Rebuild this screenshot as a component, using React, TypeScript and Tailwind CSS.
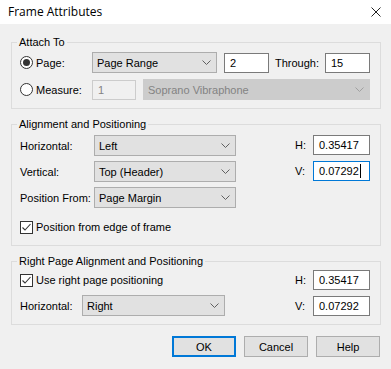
import { ReactNode } from "react";

// Windows 10 style dialog: "Frame Attributes"

function Chevron({ color = "#606060" }: { color?: string }) {
  return (
    <svg width="9" height="5" viewBox="0 0 9 5" className="shrink-0">
      <path d="M0.5 0.5 L4.5 4.5 L8.5 0.5" fill="none" stroke={color} strokeWidth="1" />
    </svg>
  );
}

function Select({ value, width, disabled }: { value: string; width: string; disabled?: boolean }) {
  return (
    <div
      className={`flex h-[21px] shrink-0 items-center justify-between border pl-[4px] pr-[5px] ${width} ${
        disabled ? "border-[#cccccc] bg-[#cccccc] text-[#838383]" : "border-[#adadad] bg-[#e1e1e1] text-black"
      }`}
    >
      <span>{value}</span>
      <Chevron color={disabled ? "#a0a0a0" : "#606060"} />
    </div>
  );
}

function Input({
  value,
  width,
  disabled,
  focused,
}: {
  value: string;
  width: string;
  disabled?: boolean;
  focused?: boolean;
}) {
  let look = "border-[#7a7a7a] bg-white text-black";
  if (disabled) look = "border-[#cccccc] bg-[#f0f0f0] text-[#838383]";
  if (focused) look = "border-[#0078d7] bg-white text-black";
  return (
    <div className={`flex h-[20px] shrink-0 items-center border pl-[5px] ${width} ${look}`}>
      <span>{value}</span>
      {focused && <span className="ml-[1px] h-[14px] w-px bg-black" />}
    </div>
  );
}

function Radio({ checked, label }: { checked?: boolean; label: string }) {
  return (
    <div className="flex items-center">
      <span className="flex h-[13px] w-[13px] items-center justify-center rounded-full border border-[#333333] bg-white">
        {checked && <span className="h-[7px] w-[7px] rounded-full bg-[#333333]" />}
      </span>
      <span className="ml-[3px]">{label}</span>
    </div>
  );
}

function Checkbox({ label }: { label: string }) {
  return (
    <div className="flex items-center">
      <span className="flex h-[13px] w-[13px] items-center justify-center border border-[#333333] bg-white">
        <svg width="11" height="11" viewBox="0 0 11 11">
          <path d="M1.5 5.5 L4 8 L9.5 2" fill="none" stroke="#333333" strokeWidth="1.1" />
        </svg>
      </span>
      <span className="ml-[3px]">{label}</span>
    </div>
  );
}

function Group({ title, className, children }: { title: string; className: string; children: ReactNode }) {
  return (
    <fieldset className={`border border-[#dcdcdc] pl-[8px] pr-[10px] ${className}`}>
      <legend className="-ml-[3px] px-[2px] leading-4">{title}</legend>
      {children}
    </fieldset>
  );
}

function Button({ label, primary }: { label: string; primary?: boolean }) {
  return (
    <div
      className={`flex h-[21px] w-[64px] items-center justify-center bg-[#e1e1e1] ${
        primary ? "border-2 border-[#0078d7]" : "border border-[#adadad]"
      }`}
    >
      {label}
    </div>
  );
}

export default function App() {
  return (
    <div className="h-[369px] w-[391px] overflow-hidden whitespace-nowrap bg-[#f0f0f0] font-['Liberation_Sans',Arial,sans-serif] text-[11px] leading-4 text-black">
      {/* title bar */}
      <div className="flex h-[24px] items-center justify-between bg-white pl-[8px] pr-[10px]">
        <span className="font-['Open_Sans',sans-serif] text-[12px]">Frame Attributes</span>
        <svg width="10" height="10" viewBox="0 0 10 10">
          <path d="M0.5 0.5 L9.5 9.5 M9.5 0.5 L0.5 9.5" stroke="#222" strokeWidth="1" />
        </svg>
      </div>

      <div className="pl-[11px] pr-[10px]">
        <Group title="Attach To" className="mt-[10px] pt-[2px] pb-[8px]">
          <div className="flex h-[21px] items-center">
            <div className="w-[72px]">
              <Radio checked label="Page:" />
            </div>
            <Select value="Page Range" width="w-[125px]" />
            <div className="ml-[7px]">
              <Input value="2" width="w-[45px]" />
            </div>
            <span className="w-[56px] pl-[6px]">Through:</span>
            <Input value="15" width="w-[45px]" />
          </div>
          <div className="mt-[6px] flex h-[21px] items-center">
            <div className="w-[72px]">
              <Radio label="Measure:" />
            </div>
            <Input value="1" width="w-[44px]" disabled />
            <div className="ml-[7px]">
              <Select value="Soprano Vibraphone" width="w-[227px]" disabled />
            </div>
          </div>
        </Group>

        <Group title="Alignment and Positioning" className="mt-[7px] pt-[3px] pb-[10px]">
          <div className="flex justify-between">
            <div className="flex flex-col gap-[5px]">
              <div className="flex items-center">
                <span className="w-[74px]">Horizontal:</span>
                <Select value="Left" width="w-[142px]" />
              </div>
              <div className="flex items-center">
                <span className="w-[74px]">Vertical:</span>
                <Select value="Top (Header)" width="w-[142px]" />
              </div>
              <div className="flex items-center">
                <span className="w-[74px]">Position From:</span>
                <Select value="Page Margin" width="w-[142px]" />
              </div>
            </div>
            <div className="flex flex-col gap-[6px]">
              <div className="flex items-center">
                <span className="w-[18px]">H:</span>
                <Input value="0.35417" width="w-[57px]" />
              </div>
              <div className="flex items-center">
                <span className="w-[18px]">V:</span>
                <Input value="0.07292" width="w-[57px]" focused />
              </div>
            </div>
          </div>
          <div className="mt-[11px]">
            <Checkbox label="Position from edge of frame" />
          </div>
        </Group>

        <Group title="Right Page Alignment and Positioning" className="mt-[7px] pt-[1px] pb-[8px]">
          <div className="flex flex-col gap-[5px]">
            <div className="flex h-[20px] items-center justify-between">
              <Checkbox label="Use right page positioning" />
              <div className="flex items-center">
                <span className="w-[18px]">H:</span>
                <Input value="0.35417" width="w-[57px]" />
              </div>
            </div>
            <div className="flex h-[21px] items-center justify-between">
              <div className="flex items-center">
                <span className="w-[62px]">Horizontal:</span>
                <Select value="Right" width="w-[143px]" />
              </div>
              <div className="flex items-center">
                <span className="w-[18px]">V:</span>
                <Input value="0.07292" width="w-[57px]" />
              </div>
            </div>
          </div>
        </Group>

        <div className="mt-[11px] flex justify-end gap-[8px] pr-[1px]">
          <Button label="OK" primary />
          <Button label="Cancel" />
          <Button label="Help" />
        </div>
      </div>
    </div>
  );
}
